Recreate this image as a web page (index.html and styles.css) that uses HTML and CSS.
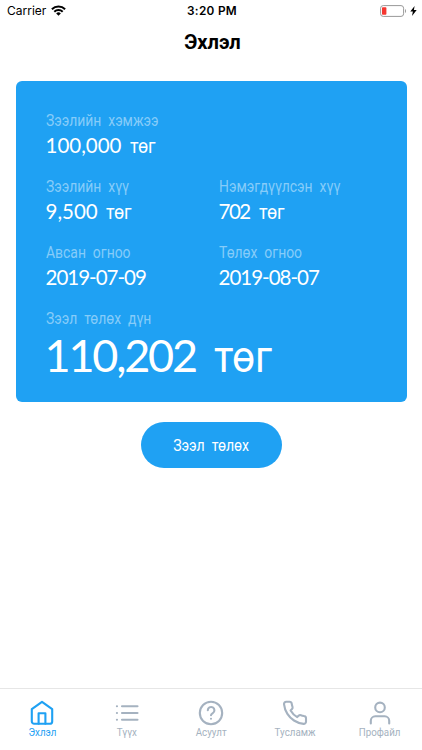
FILE: index.html
```
<!DOCTYPE html>
<html lang="mn">
<head>
    <meta charset="utf-8">
    <title>Эхлэл</title>
    <link rel="stylesheet" href="styles.css">
</head>
<body>
    <div class="statusbar">
        <div class="carrier">
            <span>Carrier</span>
            <svg class="wifi" viewBox="0 0 15 11" fill="none" stroke="#000" stroke-width="2">
                <path d="M.9 4.2a9.4 9.4 0 0 1 13.2 0M3.3 6.7a6 6 0 0 1 8.4 0"/>
                <path d="M7.5 10.7 5.2 8.4a3.3 3.3 0 0 1 4.6 0z" fill="#000" stroke="none"/>
            </svg>
        </div>
        <div class="time">3:20 PM</div>
        <div class="battery">
            <svg class="battery-icon" viewBox="0 0 27 12">
                <rect x=".6" y=".6" width="23" height="10.8" rx="2.6" fill="none" stroke="#999" stroke-width="1"/>
                <rect x="2" y="2.2" width="4.4" height="7.6" rx=".8" fill="#f5362f"/>
                <path d="M25 4v4c1.4-.6 1.4-3.4 0-4z" fill="#999"/>
            </svg>
            <svg class="bolt" viewBox="0 0 7 10"><path d="M4.6 0 .3 5.6h2.6L2 10l4.7-5.9H3.9z"/></svg>
        </div>
    </div>
    <h1 class="title">Эхлэл</h1>

    <div class="content">
        <div class="card">
            <div class="item wide">
                <div class="label">Зээлийн хэмжээ</div>
                <div class="value"><span class="num">100,000</span><span class="unit">төг</span></div>
            </div>
            <div class="item">
                <div class="label">Зээлийн хүү</div>
                <div class="value"><span class="num">9,500</span><span class="unit">төг</span></div>
            </div>
            <div class="item">
                <div class="label">Нэмэгдүүлсэн хүү</div>
                <div class="value"><span class="num short">702</span><span class="unit">төг</span></div>
            </div>
            <div class="item">
                <div class="label">Авсан огноо</div>
                <div class="value"><span class="num date">2019-07-09</span></div>
            </div>
            <div class="item">
                <div class="label">Төлөх огноо</div>
                <div class="value"><span class="num date">2019-08-07</span></div>
            </div>
            <div class="item wide">
                <div class="label">Зээл төлөх дүн</div>
                <div class="value total"><span class="num">110,202</span><span class="unit">төг</span></div>
            </div>
        </div>
        <button class="pay"><span>Зээл төлөх</span></button>
    </div>

    <nav class="tabs">
        <a class="tab active">
            <svg viewBox="0 0 26 26">
                <path d="M2.8 9.2 13 1.8l10.2 7.4v12.2a2.4 2.4 0 0 1-2.4 2.4H5.2a2.4 2.4 0 0 1-2.4-2.4z"/>
                <path d="M9.6 23.8V13.2h6.8v10.6"/>
            </svg>
            <span>Эхлэл</span>
        </a>
        <a class="tab">
            <svg viewBox="0 0 26 26">
                <path d="M8 6.3h15.5M8 13h15.5M8 19.7h15.5M2.9 6.3h.1M2.9 13h.1M2.9 19.7h.1"/>
            </svg>
            <span>Түүх</span>
        </a>
        <a class="tab">
            <svg viewBox="0 0 26 26">
                <circle cx="13" cy="13" r="11.2"/>
                <path d="M9.8 10.2a3.3 3.3 0 1 1 5 2.9c-1.2.7-1.8 1.1-1.8 2.1M13 18.7v.1"/>
            </svg>
            <span>Асуулт</span>
        </a>
        <a class="tab">
            <svg viewBox="0 0 26 26">
                <path d="M24 18.4v3.3a2.2 2.2 0 0 1-2.4 2.2 22 22 0 0 1-9.6-3.4 21.6 21.6 0 0 1-6.6-6.6A22 22 0 0 1 2 4.2 2.2 2.2 0 0 1 4.2 1.8h3.3a2.2 2.2 0 0 1 2.2 1.9c.15 1.05.4 2.1.8 3.1a2.2 2.2 0 0 1-.5 2.3l-1.4 1.4a17.6 17.6 0 0 0 6.6 6.6l1.4-1.4a2.2 2.2 0 0 1 2.3-.5c1 .4 2.05.65 3.1.8a2.2 2.2 0 0 1 2 2.4z"/>
            </svg>
            <span>Тусламж</span>
        </a>
        <a class="tab">
            <svg viewBox="0 0 26 26">
                <circle cx="13" cy="7.4" r="4.8"/>
                <path d="M3.8 23.4v-2.6a4.5 4.5 0 0 1 4.5-4.5h9.4a4.5 4.5 0 0 1 4.5 4.5v2.6"/>
            </svg>
            <span>Профайл</span>
        </a>
    </nav>
</body>
</html>
```
FILE: styles.css
```
:root {
    --blue: #1fa1f3;
    --label: #86ccf9;
    --gray: #a5b2c0;
}

* {
    box-sizing: border-box;
}

body {
    margin: 0;
    height: 750px;
    display: flex;
    flex-direction: column;
    background: #fff;
    font-family: Roboto, "Liberation Sans", sans-serif;
    overflow: hidden;
}

.statusbar {
    display: grid;
    grid-template-columns: 1fr auto 1fr;
    align-items: center;
    height: 21px;
    padding: 0 5px 0 7px;
    font-family: Inter, sans-serif;
    font-size: 12px;
}

.carrier {
    display: flex;
    align-items: center;
    gap: 5px;
}

.wifi {
    width: 15px;
    height: 11px;
}

.time {
    font-weight: 600;
    font-size: 11.8px;
    letter-spacing: 0.3px;
}

.battery {
    display: flex;
    justify-content: flex-end;
    align-items: center;
    gap: 3px;
}

.battery-icon {
    width: 27px;
    height: 12px;
}

.bolt {
    width: 7px;
    height: 10px;
}

.title {
    margin: 0;
    height: 60px;
    padding-left: 3px;
    line-height: 43px;
    font-size: 21px;
    font-weight: 700;
    text-align: center;
    transform: scaleX(0.96);
}

.content {
    flex: 1;
    padding: 0 15.5px;
    display: flex;
    flex-direction: column;
    align-items: center;
}

.card {
    width: 100%;
    height: 321px;
    padding: 28px 30px 0;
    display: grid;
    grid-template-columns: 173px 1fr;
    grid-auto-rows: 66px;
    align-content: start;
    border-radius: 6px;
    background: var(--blue);
    color: #fff;
}

.wide {
    grid-column: 1 / -1;
}

.label {
    height: 23px;
    line-height: 23px;
    font-size: 16px;
    font-weight: 400;
    word-spacing: 4px;
    white-space: nowrap;
    color: var(--label);
    transform: scaleX(0.87);
    transform-origin: left;
}

.value {
    height: 26px;
    line-height: 26px;
    font-size: 20.5px;
    white-space: nowrap;
}

.num {
    display: inline-block;
    font-family: Lato, sans-serif;
    letter-spacing: 0;
    margin-right: 8px;
}

.num.short {
    letter-spacing: -1.5px;
    margin-right: 9px;
}

.num.date {
    letter-spacing: -1px;
}

.unit {
    display: inline-block;
    transform: scaleX(0.87);
    transform-origin: left;
}

.total {
    height: 50px;
    line-height: 50px;
    font-size: 45px;
}

.total .num {
    letter-spacing: -2.2px;
    margin: 0 18px 0 -1px;
}

.total .unit {
    transform: scaleX(0.9);
}

.pay {
    width: 141px;
    height: 46px;
    margin-top: 20px;
    border: none;
    border-radius: 23px;
    background: var(--blue);
    color: #fff;
    font-family: inherit;
    font-size: 16px;
    font-weight: 400;
    word-spacing: 4px;
}

.pay span {
    display: inline-block;
    transform: scaleX(0.88);
}

.tabs {
    display: flex;
    height: 62px;
    padding-top: 11px;
    border-top: 1px solid #e6e6e6;
}

.tab {
    flex: 1;
    display: flex;
    flex-direction: column;
    align-items: center;
    color: var(--gray);
    font-size: 11.5px;
    line-height: 12px;
}

.tab span {
    transform: scaleX(0.85);
}

.tab svg {
    width: 26px;
    height: 26px;
    fill: none;
    stroke: currentColor;
    stroke-width: 2.1;
    stroke-linecap: round;
    stroke-linejoin: round;
}

.active {
    color: var(--blue);
}
```
